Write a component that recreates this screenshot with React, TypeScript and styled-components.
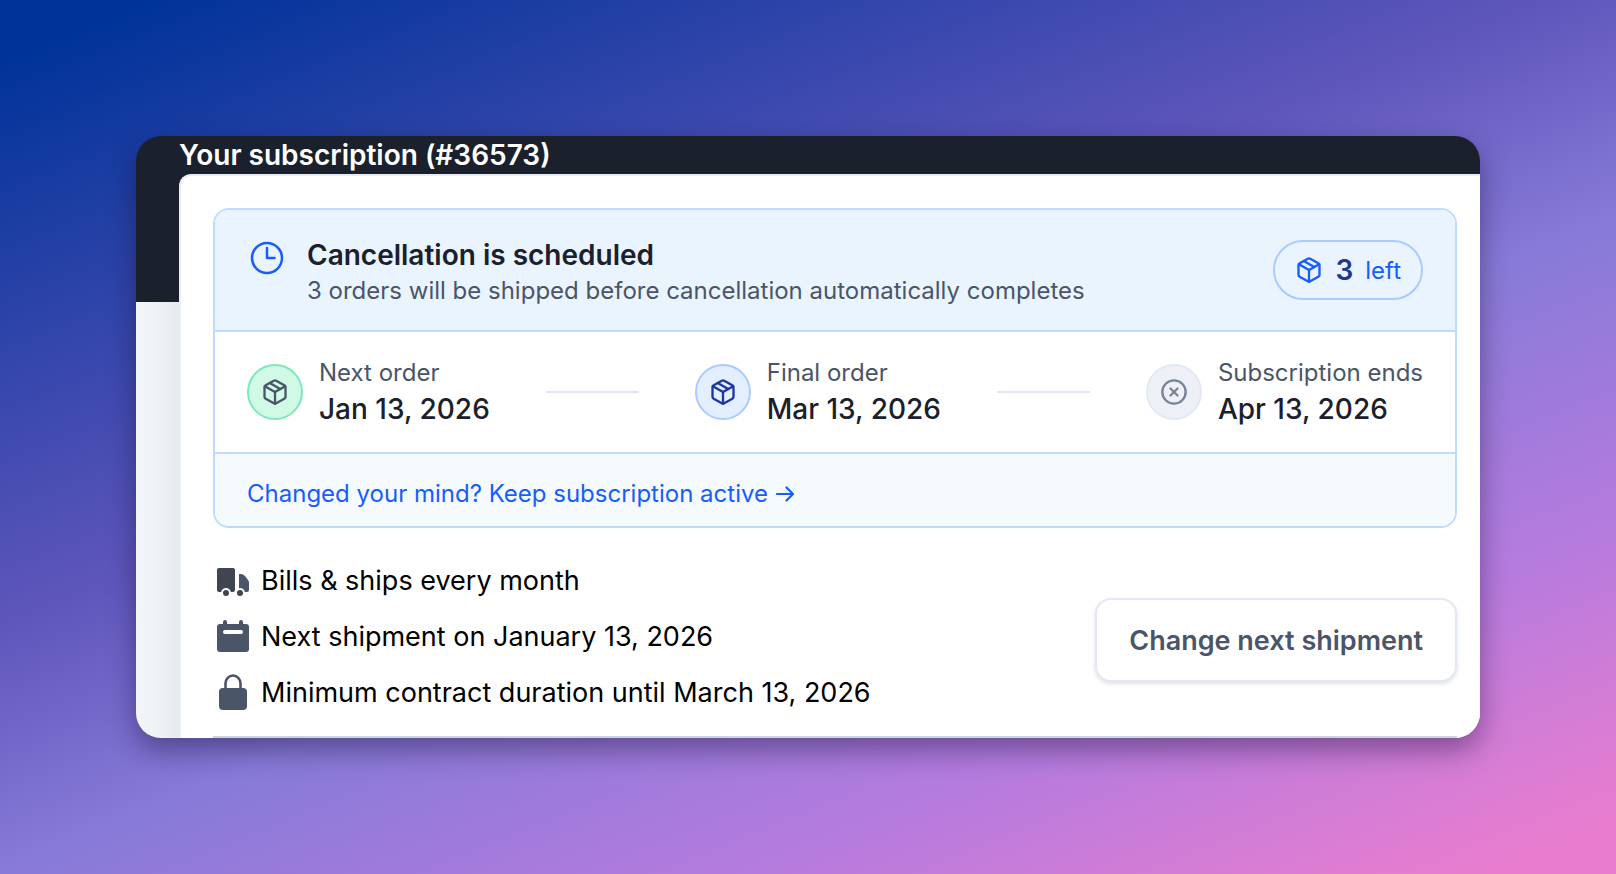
import React from "react";
import styled, { createGlobalStyle } from "styled-components";
import { CircleX, Package } from "lucide-react";

const GlobalStyle = createGlobalStyle`
  *, *::before, *::after { box-sizing: border-box; }
  body { margin: 0; font-family: Inter, "Liberation Sans", sans-serif; color: #000; }
  h1, h2, p, ul, ol { margin: 0; padding: 0; }
  ul, ol { list-style: none; }
`;

const Backdrop = styled.div`
  min-height: 100vh;
  padding: 136px;
  background: linear-gradient(158deg, #003399 4%, #5f56bb 41%, #877ad8 57%, #b57bde 77%, #e87dcf 96%);
`;

const Frame = styled.div`
  border-radius: 25px;
  box-shadow: 0 12px 28px rgba(20, 10, 50, 0.42);
`;

const Window = styled.main`
  border-radius: 25px;
  overflow: hidden;
  background: linear-gradient(to bottom, #1b212c 166px, transparent 166px),
    linear-gradient(to right, #f2f6f9, #eff3f6 20px, #e6e9ee 43px);
  padding-left: 43px;
`;

const Title = styled.h1`
  color: #fff;
  font-size: 28px;
  line-height: 38px;
  font-weight: 600;
`;

const Panel = styled.section`
  border: 2px solid #e9eef5;
  border-width: 2px 0 0 2px;
  border-radius: 12px 0 0 0;
  background: #fff;
  padding: 32px 23px 0 32px;
`;

const Notice = styled.section`
  border: 2px solid #bedbff;
  border-radius: 16px;
  overflow: hidden;
`;

const NoticeHeader = styled.header`
  display: flex;
  align-items: center;
  gap: 20px;
  height: 120px;
  padding: 28px 32px;
  background: #eaf4ff;
`;

const ClockIcon = styled.svg`
  width: 40px;
  height: 40px;
  align-self: flex-start;
  color: #155dfc;
`;

const HeaderText = styled.div`
  flex: 1;
  padding-top: 5px;
`;

const NoticeTitle = styled.h2`
  font-size: 28px;
  line-height: 36px;
  font-weight: 600;
  color: #1a202c;
`;

const NoticeBody = styled.p`
  font-size: 24px;
  line-height: 36px;
  color: #4a5568;
`;

const Pill = styled.div`
  display: flex;
  align-items: center;
  gap: 12px;
  height: 60px;
  padding: 0 20px;
  border: 2px solid #a9cbff;
  border-radius: 30px;
  font-size: 24px;
  color: #155dfc;
`;

const PillCount = styled.strong`
  font-size: 28px;
  font-weight: 600;
  color: #1c398e;
`;

const Steps = styled.ol`
  display: flex;
  align-items: center;
  height: 124px;
  padding: 0 32px;
  border: solid #bedbff;
  border-width: 2px 0;
`;

const Step = styled.li`
  display: flex;
  align-items: center;
  gap: 16px;
`;

const Connector = styled.li`
  flex: 1;
  height: 2px;
  margin: 0 56px;
  background: #dfe6f1;
`;

const tones = {
  green: { fill: "#d0fae5", edge: "#7ce8bb", icon: "#4a5568" },
  blue: { fill: "#e3effe", edge: "#a9cbff", icon: "#1e35a5" },
  gray: { fill: "#edf0f6", edge: "#e2e8f5", icon: "#7a8496" },
};

const StepBadge = styled.span<{ $tone: keyof typeof tones }>`
  display: flex;
  align-items: center;
  justify-content: center;
  width: 56px;
  height: 56px;
  border: 2px solid ${(p) => tones[p.$tone].edge};
  border-radius: 50%;
  background: ${(p) => tones[p.$tone].fill};
  color: ${(p) => tones[p.$tone].icon};
`;

const StepText = styled.div`
  padding-top: 1px;
`;

const StepLabel = styled.p`
  font-size: 24px;
  line-height: 32px;
  color: #4a5568;
`;

const StepDate = styled.p`
  font-size: 28px;
  line-height: 40px;
  font-weight: 500;
  color: #1a202c;
`;

const NoticeFooter = styled.footer`
  display: flex;
  align-items: center;
  height: 72px;
  padding: 8px 32px 0;
  background: #f5faff;
`;

const KeepLink = styled.a`
  display: flex;
  align-items: center;
  gap: 8px;
  font-size: 24px;
  line-height: 32px;
  color: #155dfc;
  text-decoration: none;
`;

const Details = styled.div`
  display: flex;
  align-items: center;
  justify-content: space-between;
  padding: 24px 0 16px;
  border-bottom: 2px solid #cbd5e0;
`;

const Fact = styled.li`
  display: flex;
  align-items: center;
  gap: 8px;
  height: 56px;
  font-size: 27px;
`;

const FactIcon = styled.svg`
  width: 40px;
  height: 40px;
`;

const ChangeButton = styled.button`
  height: 84px;
  margin-top: 8px;
  padding: 0 32px;
  border: 2px solid #e2e8f5;
  border-radius: 16px;
  background: #fff;
  color: #4a5568;
  font: 600 27px Inter, "Liberation Sans", sans-serif;
  box-shadow: 0 2px 4px rgba(0, 0, 0, 0.12);
`;

const TruckIcon = () => (
  <FactIcon viewBox="0 0 40 40" aria-hidden="true">
    <rect x="4" y="8" width="18" height="24" rx="2" fill="#404552" />
    <path d="M26 14h2q2 0 4 2l3 4q1 1 1 3v7a2 2 0 0 1-2 2h-8z" fill="#4a5568" />
    <g fill="#404552" stroke="#fff" strokeWidth="2">
      <circle cx="13" cy="33" r="4" />
      <circle cx="27" cy="33" r="4" />
    </g>
  </FactIcon>
);

const CalendarIcon = () => (
  <FactIcon viewBox="0 0 40 40" fill="#4a5568" aria-hidden="true">
    <rect x="4" y="8" width="32" height="28" rx="3" />
    <rect x="10" y="4" width="4" height="8" rx="2" />
    <rect x="26" y="4" width="4" height="8" rx="2" />
    <rect x="10" y="14" width="20" height="4" rx="2" fill="#fff" />
  </FactIcon>
);

const LockIcon = () => (
  <FactIcon viewBox="0 0 40 40" aria-hidden="true">
    <path d="M12.5 18v-6.5a7.5 8 0 0 1 15 0V18" fill="none" stroke="#4a5568" strokeWidth="2.6" />
    <rect x="6" y="16" width="28" height="22" rx="4" fill="#4a5568" />
  </FactIcon>
);

export default function App() {
  return (
    <Backdrop>
      <GlobalStyle />
      <Frame>
        <Window>
          <Title>Your subscription (#36573)</Title>
          <Panel>
            <Notice>
              <NoticeHeader>
                <ClockIcon viewBox="0 0 24 24" fill="none" stroke="currentColor" strokeWidth="1.5" strokeLinecap="round" strokeLinejoin="round" aria-hidden="true">
                  <path d="M12 6v6h4.5" />
                  <circle cx="12" cy="12" r="9" />
                </ClockIcon>
                <HeaderText>
                  <NoticeTitle>Cancellation is scheduled</NoticeTitle>
                  <NoticeBody>3 orders will be shipped before cancellation automatically completes</NoticeBody>
                </HeaderText>
                <Pill>
                  <Package size={28} aria-hidden="true" />
                  <PillCount>3</PillCount>
                  <span>left</span>
                </Pill>
              </NoticeHeader>
              <Steps>
                <Step>
                  <StepBadge $tone="green"><Package size={28} aria-hidden="true" /></StepBadge>
                  <StepText>
                    <StepLabel>Next order</StepLabel>
                    <StepDate>Jan 13, 2026</StepDate>
                  </StepText>
                </Step>
                <Connector aria-hidden="true" />
                <Step>
                  <StepBadge $tone="blue"><Package size={28} aria-hidden="true" /></StepBadge>
                  <StepText>
                    <StepLabel>Final order</StepLabel>
                    <StepDate>Mar 13, 2026</StepDate>
                  </StepText>
                </Step>
                <Connector aria-hidden="true" />
                <Step>
                  <StepBadge $tone="gray"><CircleX size={28} aria-hidden="true" /></StepBadge>
                  <StepText>
                    <StepLabel>Subscription ends</StepLabel>
                    <StepDate>Apr 13, 2026</StepDate>
                  </StepText>
                </Step>
              </Steps>
              <NoticeFooter>
                <KeepLink href="#keep">
                  Changed your mind? Keep subscription active
                  <svg width="18" height="18" viewBox="0 0 18 18" fill="none" stroke="currentColor" strokeWidth="2.2" strokeLinecap="round" strokeLinejoin="round" aria-hidden="true">
                    <path d="M1 9h16M10.500 2.500l6.500 6.500-6.500 6.500" />
                  </svg>
                </KeepLink>
              </NoticeFooter>
            </Notice>
            <Details>
              <ul>
                <Fact><TruckIcon />Bills &amp; ships every month</Fact>
                <Fact><CalendarIcon />Next shipment on January 13, 2026</Fact>
                <Fact><LockIcon />Minimum contract duration until March 13, 2026</Fact>
              </ul>
              <ChangeButton type="button">Change next shipment</ChangeButton>
            </Details>
          </Panel>
        </Window>
      </Frame>
    </Backdrop>
  );
}
